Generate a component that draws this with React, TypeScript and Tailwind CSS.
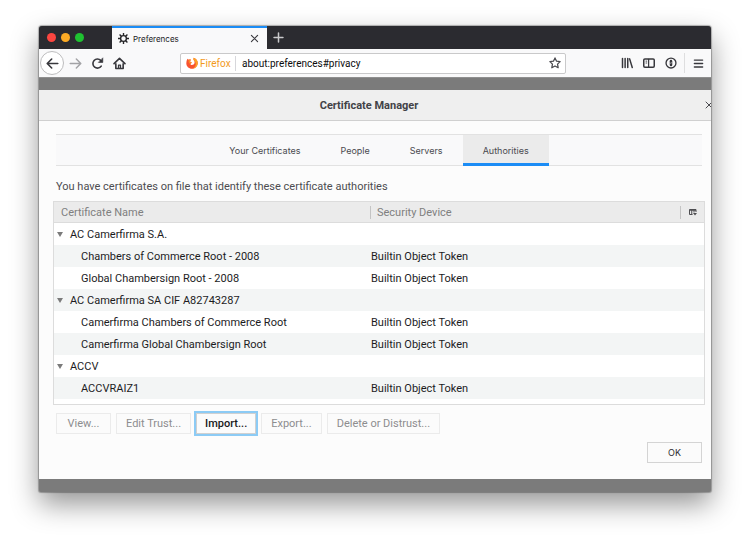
import type { ReactNode } from "react";

type Row = { name: string; device?: string };

const rows: Row[] = [
  { name: "AC Camerfirma S.A." },
  { name: "Chambers of Commerce Root - 2008", device: "Builtin Object Token" },
  { name: "Global Chambersign Root - 2008", device: "Builtin Object Token" },
  { name: "AC Camerfirma SA CIF A82743287" },
  { name: "Camerfirma Chambers of Commerce Root", device: "Builtin Object Token" },
  { name: "Camerfirma Global Chambersign Root", device: "Builtin Object Token" },
  { name: "ACCV" },
  { name: "ACCVRAIZ1", device: "Builtin Object Token" },
];

const tabs = ["Your Certificates", "People", "Servers", "Authorities"];

function Icon({ children, className = "size-3" }: { children: ReactNode; className?: string }) {
  return (
    <svg
      viewBox="0 0 16 16"
      className={className}
      fill="none"
      stroke="currentColor"
      strokeWidth="2"
      strokeLinecap="round"
      strokeLinejoin="round"
      aria-hidden="true"
    >
      {children}
    </svg>
  );
}

function ToolButton({ label, children }: { label: string; children: ReactNode }) {
  return (
    <button aria-label={label} className="flex h-6 w-[22px] items-center justify-center">
      {children}
    </button>
  );
}

function TitleBar() {
  return (
    <div className="flex h-[23px] bg-[#2b2b30]">
      <div className="flex w-[73px] items-center gap-[5px] pl-2">
        <button aria-label="Close window" className="size-[9px] rounded-full bg-[#fc4640]" />
        <button aria-label="Minimize window" className="size-[9px] rounded-full bg-[#fdab25]" />
        <button aria-label="Zoom window" className="size-[9px] rounded-full bg-[#1fc231]" />
      </div>
      <div className="flex w-[155px] items-center border-t-2 border-[#1b8cf5] bg-[#f9f9fa] pr-2 pb-px pl-[6px]">
        <svg viewBox="0 0 16 16" className="size-[11px] text-[#252528]" fill="none" stroke="currentColor" aria-hidden="true">
          <circle cx="8" cy="8" r="4.200" strokeWidth="2" />
          <path
            d="M8 0v4M8 12v4M0 8h4M12 8h4M2.3 2.3l2.8 2.8M10.9 10.9l2.8 2.8M2.3 13.7l2.8-2.8M10.9 5.1l2.8-2.8"
            strokeWidth="2"
          />
        </svg>
        <span className="ml-1 flex-1 pt-0.5 font-['Inter',sans-serif] text-[8px] text-[#202023]">Preferences</span>
        <button aria-label="Close tab" className="text-[#38383d]">
          <Icon className="size-[9px]">
            <path d="M2.5 2.5l11 11M13.5 2.5l-11 11" />
          </Icon>
        </button>
      </div>
      <button aria-label="New tab" className="flex w-[23px] items-center justify-center text-[#c9c9cc]">
        <Icon className="size-[11px]">
          <path d="M8 1.5v13M1.5 8h13" strokeWidth="2.2" />
        </Icon>
      </button>
    </div>
  );
}

function Toolbar() {
  return (
    <div className="flex h-7 items-center bg-[#f9f9fa] text-[#38383d]">
      <button
        aria-label="Back"
        className="ml-px flex size-6 items-center justify-center rounded-full border border-[#bdbdbe] bg-white"
      >
        <Icon className="size-[13px]">
          <path d="M14.5 8H2M7 2.5L1.500 8 7 13.5" />
        </Icon>
      </button>
      <button aria-label="Forward" className="flex h-6 w-[22px] items-center justify-center text-[#a3a3a6]">
        <Icon className="size-[13px]">
          <path d="M1.5 8H14M9 2.5L14.500 8 9 13.5" strokeWidth="1.8" />
        </Icon>
      </button>
      <ToolButton label="Reload">
        <Icon className="size-[13px]">
          <path d="M12.6 11.2A5.6 5.6 0 1 1 12 4.2" />
          <path d="M14.5 1.5v5.2H9.500z" fill="currentColor" strokeWidth="0.800" />
        </Icon>
      </ToolButton>
      <ToolButton label="Home">
        <Icon className="size-[13px]">
          <path d="M1.3 8.2L8 1.8l6.7 6.4" />
          <path d="M3.5 8.5V14.200h9V8.5" />
          <path d="M6.8 14v-4h2.4v4" strokeWidth="1.6" />
        </Icon>
      </ToolButton>
      <div className="mr-[50px] ml-[50px] flex h-[21px] min-w-0 flex-1 items-center rounded-xs border border-[#c9c9ca] bg-white pr-1 pl-[5px]">
        <svg viewBox="0 0 24 24" className="size-3 shrink-0" aria-hidden="true">
          <path d="M3 3.5c1 .6 1.8 1.3 2.4 2.2C7 4.8 8.6 5 10 5.6 8.600 6.600 8 8 8.300 9.500l3.200 1.500c0 1.500-2.500 1.600-2.500 3 .3 2.300 3.400 2.800 6 1.200 2.700-1.800 2.900-6 .6-8.600-.8-1.300-1-3-.1-5C21 3.500 24 8 23.500 13 22.800 19 18 23.500 12 23.500 5.500 23.500.600 18.500.6 12.500.6 9 1.500 6 3 3.500z" fill="#f8532f" />
          <path d="M15.500 1.600C21 3.500 24 8 23.500 13c-.6 5.800-5 10-10.500 10.500 4-2 6.500-5 6.500-9.500 0-3-1.500-5.500-3.900-7.400-.8-1.300-1-3-.1-5z" fill="#fca326" />
          <path d="M5.400 5.700C7 4.800 8.600 5 10 5.600 8.600 6.600 8 8 8.300 9.500l3.200 1.500c0 1.500-2.500 1.600-2.500 3-2.600-.5-5-4-3.600-8.300z" fill="#fa8c27" />
        </svg>
        <span className="ml-0.5 w-[35px] text-[10px] text-[#f29a1c]">Firefox</span>
        <span className="h-[15px] w-px bg-[#d7d7db]" />
        <input
          aria-label="Address"
          defaultValue="about:preferences#privacy"
          className="ml-[6px] min-w-0 flex-1 bg-transparent text-[10px] text-[#0c0c0d] outline-none"
        />
        <button aria-label="Bookmark this page" className="text-[#4a4a4f]">
          <Icon className="size-3">
            <path d="M8 1.2l2.100 4.400 4.700.600-3.400 3.300.8 4.800L8 12l-4.200 2.300.8-4.800L1.200 6.200l4.700-.6z" strokeWidth="1.700" />
          </Icon>
        </button>
      </div>
      <ToolButton label="Library">
        <Icon className="size-3">
          <path d="M2 2v12M5.500 2v12M9 2v12M11.500 2.500l3.500 11.500" />
        </Icon>
      </ToolButton>
      <ToolButton label="Sidebars">
        <Icon className="size-3">
          <rect x="1" y="2.500" width="14" height="11" rx="1.500" />
          <path d="M7.500 3v10" strokeWidth="1.600" />
          <path d="M4 5.500h1M4 8h1" strokeWidth="1.200" />
        </Icon>
      </ToolButton>
      <ToolButton label="Password manager">
        <Icon className="size-3">
          <circle cx="8" cy="8" r="6.600" strokeWidth="1.800" />
          <path d="M8 5.500v5" strokeWidth="3.400" />
          <path d="M7.200 8.300l1.600-.600" stroke="#f9f9fa" strokeWidth="0.700" />
        </Icon>
      </ToolButton>
      <span className="ml-[2px] h-5 w-px bg-[#dededf]" />
      <button aria-label="Open menu" className="flex h-6 w-[26px] items-center justify-center">
        <Icon className="size-[11px]">
          <path d="M2 3h12M2 8h12M2 13h12" />
        </Icon>
      </button>
    </div>
  );
}

function CertificateTable() {
  return (
    <div className="mx-[-3px] mt-[6px] border border-[#dcdcdc] bg-white pb-[5px]">
      <table className="w-full table-fixed text-left text-[11px]">
        <colgroup>
          <col className="w-[317px]" />
          <col />
          <col className="w-6" />
        </colgroup>
        <thead className="text-[#7f7f80]">
          <tr className="h-[21px] bg-[#ebebeb] shadow-[inset_0_-1px_0_#dcdcdc]">
            <th className="p-0 pt-0.5 pl-[7px] font-normal">Certificate Name</th>
            <th className="p-0 font-normal">
              <span className="-ml-px block h-[13px] border-l border-[#c4c4c4] pl-[6px] leading-[13px]">
                Security Device
              </span>
            </th>
            <th className="p-0">
              <button
                aria-label="Select columns to display"
                className="flex h-[13px] w-full items-center justify-center border-l border-[#c4c4c4] text-[#4d4d50]"
              >
                <svg viewBox="0 0 16 14" className="h-[7px] w-2" fill="none" stroke="currentColor" strokeWidth="2" aria-hidden="true">
                  <path d="M7 11H1V1h13v5M1 2.500h13M5.500 2v9M10 2v5" />
                  <path d="M8 8h8l-4 5z" fill="currentColor" stroke="none" />
                </svg>
              </button>
            </th>
          </tr>
        </thead>
        <tbody className="text-[#1c1c1e]">
          {rows.map((row) => (
            <tr key={row.name} className="h-[22px] even:bg-[#f3f5f5]">
              <td className="p-0 pt-0.5">
                {row.device ? (
                  <span className="pl-[27px]">{row.name}</span>
                ) : (
                  <span className="flex items-center">
                    <button aria-label={`Collapse ${row.name}`} className="w-4 pb-0.5 pl-[3px] text-[#7b7b7b]">
                      <svg viewBox="0 0 6 5" className="h-[5px] w-[6px]" aria-hidden="true">
                        <path d="M0 0h6L3 5z" fill="currentColor" />
                      </svg>
                    </button>
                    {row.name}
                  </span>
                )}
              </td>
              <td className="p-0 pt-0.5">{row.device}</td>
              <td className="p-0" />
            </tr>
          ))}
        </tbody>
      </table>
    </div>
  );
}

function DisabledButton({ children }: { children: ReactNode }) {
  return (
    <button disabled className="h-[21px] min-w-[55px] border border-[#ebebeb] bg-[#fbfbfb] px-[9px] pt-0.5 text-[#8d8d8f]">
      {children}
    </button>
  );
}

function CertificateManager() {
  return (
    <section aria-labelledby="dialog-title" className="bg-[#fcfcfc]">
      <header className="flex h-[31px] items-center border-b border-[#d0d0d0] bg-[#efefef]">
        <h1 id="dialog-title" className="flex-1 pt-0.5 text-center text-[11px] font-bold text-[#424247]">
          Certificate Manager
        </h1>
        <button aria-label="Close" className="-mr-2 flex w-5 shrink-0 justify-center text-[#4a4a4f]">
          <Icon className="size-2">
            <path d="M2 2l12 12M14 2L2 14" />
          </Icon>
        </button>
      </header>
      <div className="pt-[13px] pr-[9px] pb-4 pl-[17px] text-[11px]">
        <div
          role="tablist"
          className="flex h-8 justify-center border-y border-[#e2e2e2] bg-[#f9f9fa] font-['Inter',sans-serif] text-[9px] text-[#4a4a4f]"
        >
          {tabs.map((tab) => (
            <button
              key={tab}
              role="tab"
              aria-selected={tab === "Authorities"}
              className="-mb-px border-b-3 border-transparent px-5 pt-1 aria-selected:border-[#1b8cf5] aria-selected:bg-[#ebebeb]"
            >
              {tab}
            </button>
          ))}
        </div>
        <p className="mt-[13px] leading-4 text-[#4c4c50]">
          You have certificates on file that identify these certificate authorities
        </p>
        <CertificateTable />
        <div className="mt-2 flex items-center gap-[5px]">
          <DisabledButton>View...</DisabledButton>
          <DisabledButton>Edit Trust...</DisabledButton>
          <button className="h-[21px] border border-[#d0d0d0] bg-[#fbfbfb] px-2 pt-0.5 font-medium text-[#18181a] outline-2 outline-[#8ccbf5]">
            Import...
          </button>
          <DisabledButton>Export...</DisabledButton>
          <DisabledButton>Delete or Distrust...</DisabledButton>
        </div>
        <div className="mt-2 flex justify-end">
          <button className="h-[21px] w-[55px] border border-[#d4d4d4] bg-[#fbfbfb] font-['Inter',sans-serif] text-[9px] text-[#2a2a2e]">
            OK
          </button>
        </div>
      </div>
    </section>
  );
}

export default function App() {
  return (
    <div className="bg-white px-[39px] pt-[26px] pb-[51px] font-['Roboto',sans-serif]">
      <main className="overflow-hidden rounded-t-[3px] rounded-b-xs bg-[#7b7b7b] shadow-[0_0_1px_1px_rgba(0,0,0,0.28),0_12px_28px_rgba(0,0,0,0.42)]">
        <TitleBar />
        <Toolbar />
        <div className="border-t border-[#8f8f8f] pt-3 pb-[13px]">
          <CertificateManager />
        </div>
      </main>
    </div>
  );
}
